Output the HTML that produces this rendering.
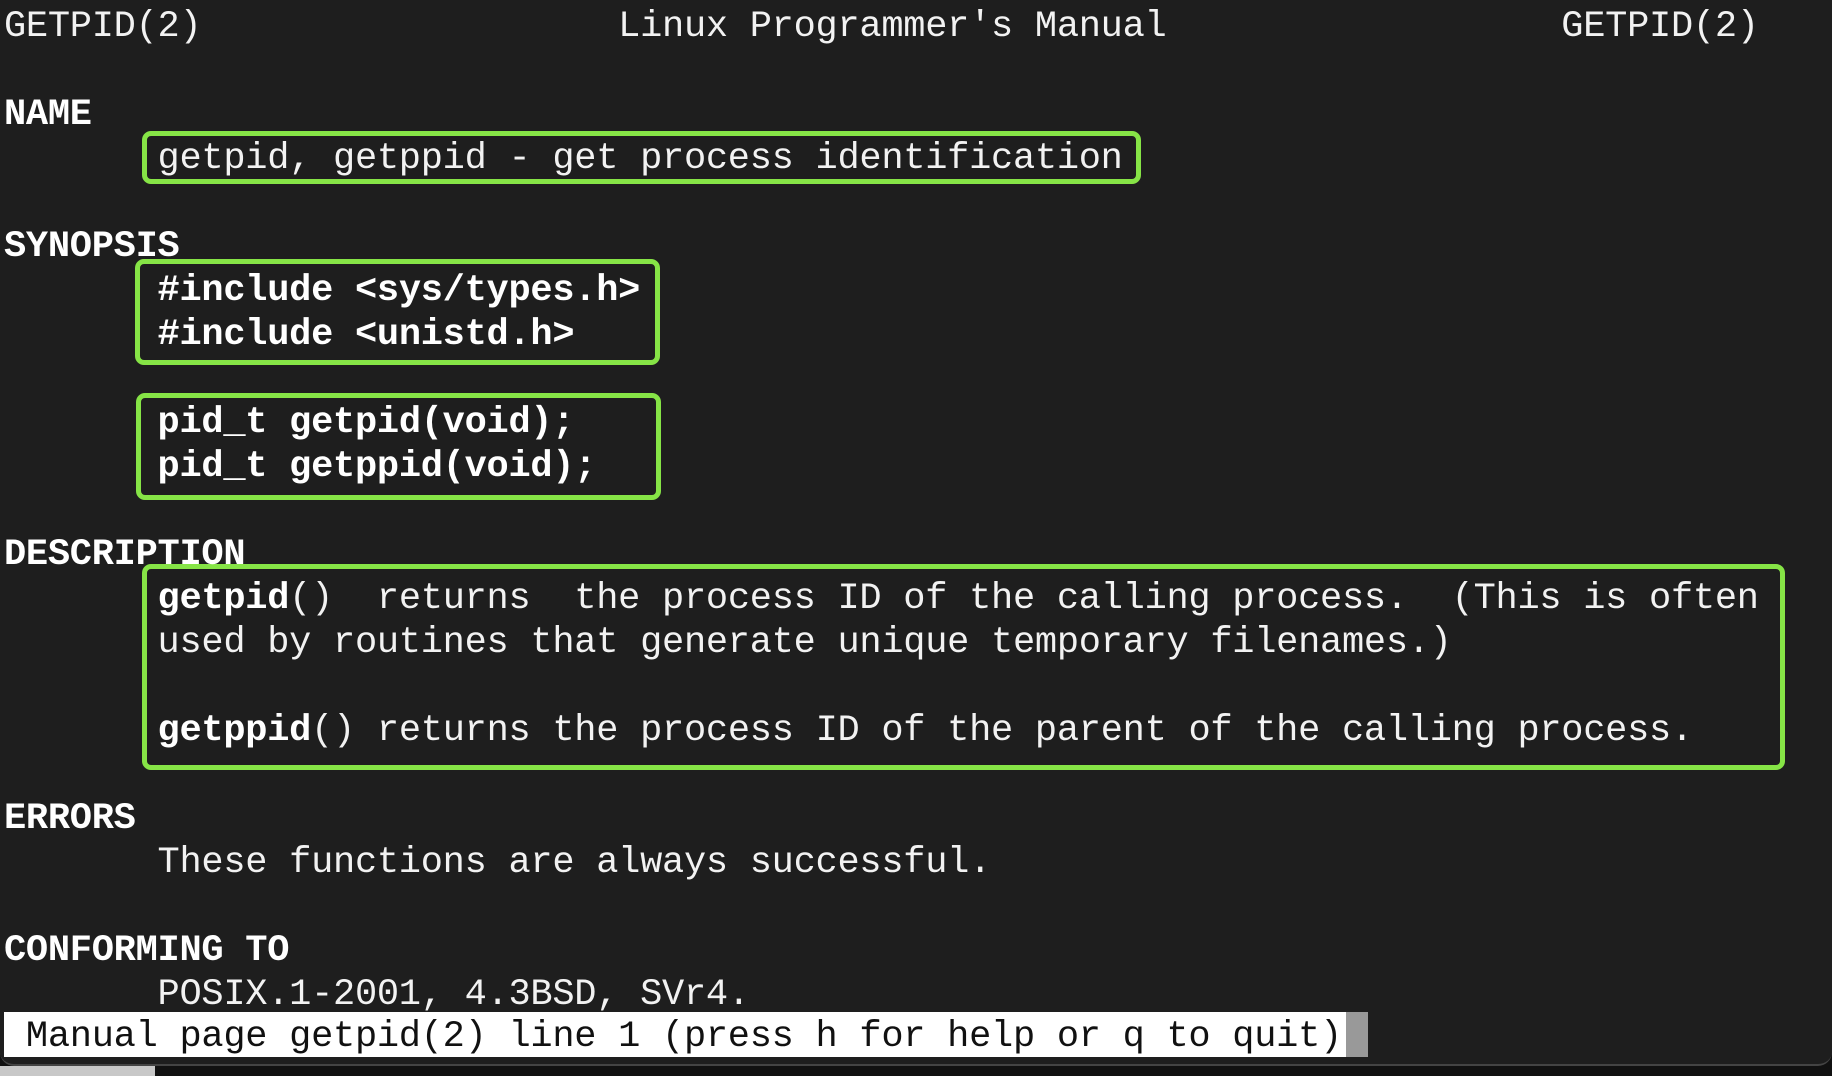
<!DOCTYPE html>
<html><head><meta charset="utf-8"><style>
html,body{margin:0;padding:0;width:1832px;height:1076px;overflow:hidden;background:#111;}
#win{position:absolute;left:0;top:0;width:1832px;height:1066px;background:#1e1e1e;border-radius:0 0 14px 14px;border-bottom:2px solid #444;box-sizing:border-box;}
#lg{position:absolute;left:0;top:1066px;width:155px;height:10px;background:#c8c8c8;}
.l{position:absolute;left:4px;white-space:pre;font-family:"Liberation Mono",monospace;font-size:37px;letter-spacing:-0.27px;color:#f2f2f2;line-height:44px;height:44px;}
b{font-weight:bold;color:#fff;}
.box{position:absolute;border:5px solid #86e446;border-radius:9px;box-sizing:border-box;}
#st{position:absolute;left:4px;top:1012px;width:1342px;height:45px;background:#fff;}
#cur{position:absolute;left:1346px;top:1012px;width:22px;height:45px;background:#999;}
</style></head><body>
<div id="win"></div><div id="lg"></div>
<div class="box" style="left:142px;top:131px;width:999px;height:53px"></div>
<div class="box" style="left:135px;top:259px;width:525px;height:106px"></div>
<div class="box" style="left:136px;top:393px;width:525px;height:107px"></div>
<div class="box" style="left:142px;top:564px;width:1643px;height:206px"></div>
<div class="l" style="top:5px">GETPID(2)                   Linux Programmer's Manual                  GETPID(2)</div>
<div class="l" style="top:93px"><b>NAME</b></div>
<div class="l" style="top:137px">       getpid, getppid - get process identification</div>
<div class="l" style="top:225px"><b>SYNOPSIS</b></div>
<div class="l" style="top:269px">       <b>#include &lt;sys/types.h&gt;</b></div>
<div class="l" style="top:313px">       <b>#include &lt;unistd.h&gt;</b></div>
<div class="l" style="top:401px">       <b>pid_t getpid(void);</b></div>
<div class="l" style="top:445px">       <b>pid_t getppid(void);</b></div>
<div class="l" style="top:533px"><b>DESCRIPTION</b></div>
<div class="l" style="top:577px">       <b>getpid</b>()  returns  the process ID of the calling process.  (This is often</div>
<div class="l" style="top:621px">       used by routines that generate unique temporary filenames.)</div>
<div class="l" style="top:709px">       <b>getppid</b>() returns the process ID of the parent of the calling process.</div>
<div class="l" style="top:797px"><b>ERRORS</b></div>
<div class="l" style="top:841px">       These functions are always successful.</div>
<div class="l" style="top:929px"><b>CONFORMING TO</b></div>
<div class="l" style="top:973px">       POSIX.1-2001, 4.3BSD, SVr4.</div>
<div id="st"></div><div id="cur"></div>
<div class="l" style="top:1015px;left:4px;color:#111"> Manual page getpid(2) line 1 (press h for help or q to quit)</div>
</body></html>
